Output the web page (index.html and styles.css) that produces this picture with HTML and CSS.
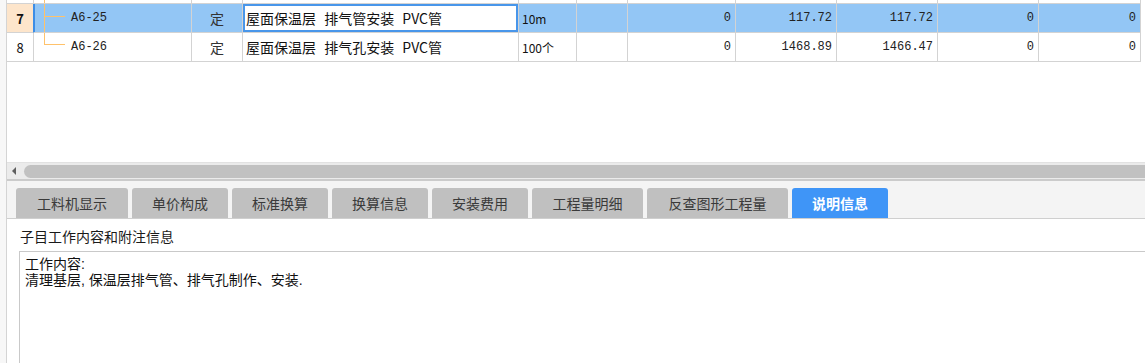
FILE: index.html
```html
<!DOCTYPE html>
<html lang="zh-CN">
<head>
    <meta charset="UTF-8">
    <meta name="viewport" content="width=device-width, initial-scale=1.0">
    <title>定额子目</title>
    <link rel="stylesheet" href="styles.css">
</head>
<body>
    <div class="app">
        <div class="grid-area">
            <div class="grid">
                <div class="row row-prev">
                    <div class="cell num"></div>
                    <div class="cell code"><span class="tree tree-mid"></span></div>
                    <div class="cell"></div>
                    <div class="cell"></div>
                    <div class="cell"></div>
                    <div class="cell"></div>
                    <div class="cell"></div>
                    <div class="cell"></div>
                    <div class="cell"></div>
                    <div class="cell"></div>
                    <div class="cell"></div>
                </div>
                <div class="row selected">
                    <div class="cell num">7</div>
                    <div class="cell code"><span class="tree tree-mid"></span><span class="code-text">A6-25</span></div>
                    <div class="cell type">定</div>
                    <div class="cell name editing">屋面保温层 排气管安装 PVC管</div>
                    <div class="cell unit">10m</div>
                    <div class="cell"></div>
                    <div class="cell val">0</div>
                    <div class="cell val">117.72</div>
                    <div class="cell val">117.72</div>
                    <div class="cell val">0</div>
                    <div class="cell val">0</div>
                </div>
                <div class="row">
                    <div class="cell num">8</div>
                    <div class="cell code"><span class="tree tree-last"></span><span class="code-text">A6-26</span></div>
                    <div class="cell type">定</div>
                    <div class="cell name">屋面保温层 排气孔安装 PVC管</div>
                    <div class="cell unit">100个</div>
                    <div class="cell"></div>
                    <div class="cell val">0</div>
                    <div class="cell val">1468.89</div>
                    <div class="cell val">1466.47</div>
                    <div class="cell val">0</div>
                    <div class="cell val">0</div>
                </div>
            </div>
        </div>

        <div class="hscroll">
            <span class="arrow-left"></span>
            <div class="thumb"></div>
        </div>

        <div class="tabs">
            <div class="tab w-112">工料机显示</div>
            <div class="tab">单价构成</div>
            <div class="tab">标准换算</div>
            <div class="tab">换算信息</div>
            <div class="tab">安装费用</div>
            <div class="tab w-111">工程量明细</div>
            <div class="tab w-141">反查图形工程量</div>
            <div class="tab active">说明信息</div>
        </div>

        <div class="desc">
            <div class="desc-title">子目工作内容和附注信息</div>
            <div class="desc-box">
                <div class="desc-line">工作内容:</div>
                <div class="desc-line">清理基层, 保温层排气管、排气孔制作、安装.</div>
            </div>
        </div>
    </div>
</body>
</html>
```

FILE: styles.css
```css
* {
    margin: 0;
    padding: 0;
    box-sizing: border-box;
}

body {
    width: 1145px;
    height: 363px;
    overflow: hidden;
    background: #f7f7f7;
    font-family: "Noto Sans CJK SC", "Noto Sans", sans-serif;
    font-size: 14px;
    color: #222;
}

.app {
    margin-left: 6px;
    height: 363px;
    border-left: 1px solid #d4d4d4;
    background: #fff;
    display: flex;
    flex-direction: column;
}

/* ---- grid ---- */

.grid-area {
    height: 162px;
    background: #fff;
}

.row {
    display: grid;
    grid-template-columns: 27px 158px 51px 276px 58px 51px 108px 101px 101px 101px 102px;
    height: 29px;
}

.row-prev {
    height: 4px;
}

.cell {
    position: relative;
    border-right: 1px solid #d3d3d3;
    border-bottom: 1px solid #d3d3d3;
    display: flex;
    align-items: center;
    white-space: nowrap;
    overflow: hidden;
    font-size: 14px;
    color: #111;
}

.num {
    justify-content: center;
    font-size: 13px;
}

.type {
    justify-content: center;
    color: #333;
}

.name {
    padding-left: 3px;
    word-spacing: 5px;
}

.unit {
    padding-left: 3px;
    font-size: 12px;
}

.val {
    justify-content: flex-end;
    padding-right: 4px;
    font-family: "Liberation Mono", monospace;
    font-size: 12px;
    color: #222;
}

.code-text {
    margin-left: 37px;
    font-family: "Liberation Mono", monospace;
    font-size: 12px;
    color: #222;
}

/* tree connector lines */
.tree {
    position: absolute;
    left: 10px;
    top: 0;
    width: 21px;
    border-left: 1px solid #ffc26b;
}

.tree-mid {
    height: 100%;
}

.tree-mid::after {
    content: "";
    position: absolute;
    left: 0;
    top: 12px;
    width: 20px;
    border-top: 1px solid #ffc26b;
}

.row-prev .tree-mid::after {
    display: none;
}

.tree-last {
    height: 12px;
    border-bottom: 1px solid #ffc26b;
}

.selected .cell {
    background: #93c6f5;
}

.selected .num {
    background: #fde5cb;
    font-weight: bold;
    border-right-color: #3c8de6;
}

.selected .code {
    box-shadow: inset 1px 0 0 #3c8de6;
}

.selected .editing {
    background: #fff;
    box-shadow: inset 0 0 0 2px #4896ea;
}

/* ---- horizontal scrollbar ---- */

.hscroll {
    height: 19px;
    background: #ebebeb;
    border-top: 1px solid #e2e2e2;
    border-bottom: 2px solid #cbcbcb;
    display: flex;
    align-items: center;
    padding-left: 5px;
}

.arrow-left {
    width: 0;
    height: 0;
    border-top: 4px solid transparent;
    border-bottom: 4px solid transparent;
    border-right: 4px solid #5f5f5f;
}

.thumb {
    flex: 1;
    height: 13px;
    margin-left: 8px;
    background: #c1c1c1;
    border-radius: 7px 0 0 7px;
}

/* ---- tabs ---- */

.tabs {
    height: 38px;
    background: #f4f4f4;
    border-bottom: 1px solid #cfcfcf;
    padding: 7px 0 0 9px;
    display: flex;
    gap: 4px;
}

.tab {
    width: 96px;
    height: 30px;
    background: #c0c0c0;
    border-radius: 3px 3px 0 0;
    display: flex;
    align-items: center;
    justify-content: center;
    color: #3a3a3a;
    font-size: 14px;
}

.w-112 { width: 112px; }
.w-111 { width: 111px; }
.w-141 { width: 141px; }

.tab.active {
    background: #3f95f7;
    color: #fff;
    font-weight: bold;
}

/* ---- description ---- */

.desc {
    flex: 1;
    background: #fff;
    display: flex;
    flex-direction: column;
}

.desc-title {
    padding: 7px 0 5px 13px;
    line-height: 20px;
    font-size: 14px;
    color: #1a1a1a;
}

.desc-box {
    flex: 1;
    margin-left: 12px;
    border: 1px solid #c9c9c9;
    border-right: none;
    border-bottom: none;
    padding: 4px 5px;
    font-family: "Liberation Sans", "Noto Sans CJK SC", sans-serif;
    font-size: 14px;
    color: #111;
}

.desc-line {
    line-height: 16px;
    height: 16px;
}
```
